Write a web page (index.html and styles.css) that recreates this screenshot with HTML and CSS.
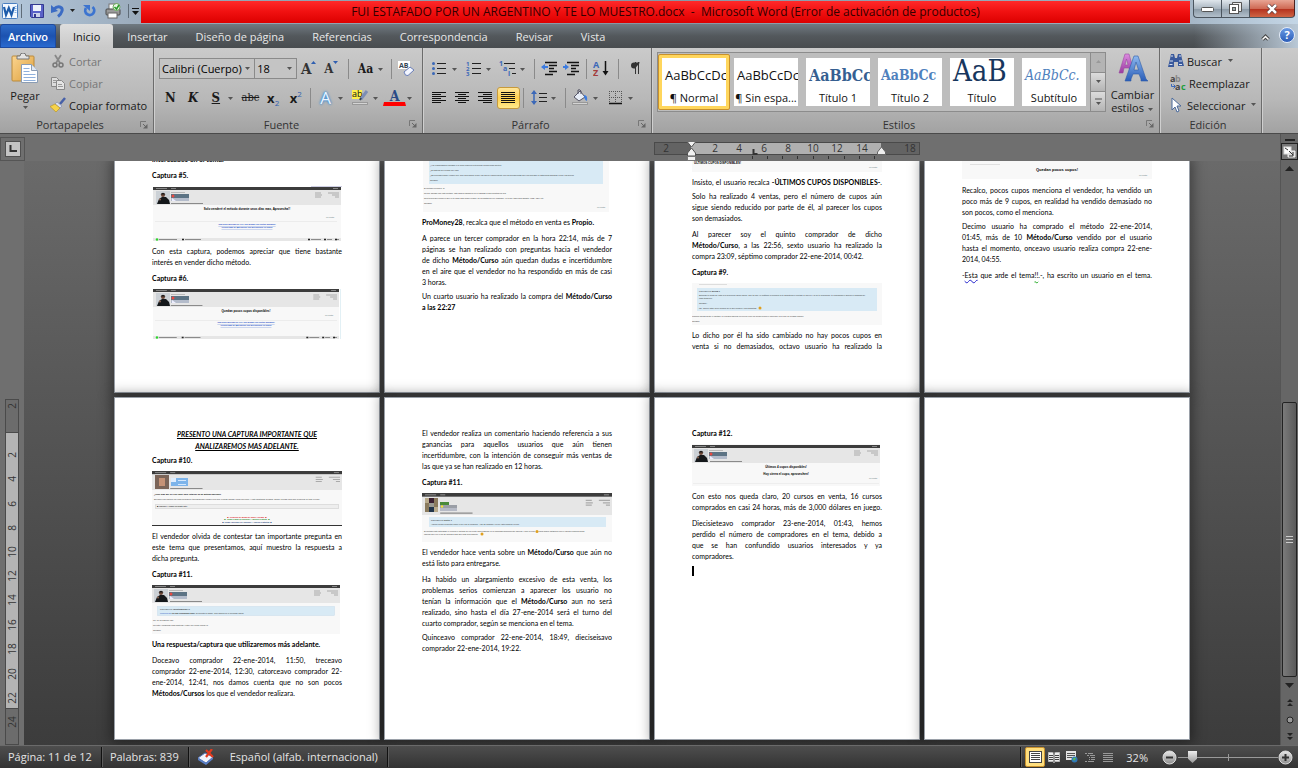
FILE: index.html
```html
<!DOCTYPE html>
<html lang="es">
  <head>
    <meta charset="UTF-8" />
    <meta name="viewport" content="width=device-width, initial-scale=1.0" />
    <title>FUI ESTAFADO POR UN ARGENTINO Y TE LO MUESTRO.docx - Microsoft Word</title>
    <link rel="stylesheet" href="styles.css">
  </head>
  <body>
    <!-- shared drawings -->
    <svg class="defs" width="0" height="0">
      <defs>
        <linearGradient id="gBlue" x1="0" y1="0" x2="0" y2="1"><stop offset="0" stop-color="#8db8ee"/><stop offset="1" stop-color="#2a5db8"/></linearGradient>
        <linearGradient id="gPink" x1="0" y1="0" x2="0" y2="1"><stop offset="0" stop-color="#dc8be0"/><stop offset="1" stop-color="#9a3aa0"/></linearGradient>
        <linearGradient id="gBoard" x1="0" y1="0" x2="1" y2="1"><stop offset="0" stop-color="#fbd590"/><stop offset="1" stop-color="#dd9f3c"/></linearGradient>
        <linearGradient id="gKnob" x1="0" y1="0" x2="0" y2="1"><stop offset="0" stop-color="#e8e8e8"/><stop offset="1" stop-color="#8c8c8c"/></linearGradient>
      </defs>
      <symbol id="arrow" viewBox="0 0 7 4"><path d="M1 0h5L3.500 3z" fill="#555"/></symbol>
      <symbol id="launch" viewBox="0 0 8 8"><path d="M.5 6V.5H6" fill="none" stroke="#777"/><path d="M3 3l3 3" stroke="#666"/><path d="M7.500 3v4.500H3z" fill="#666"/></symbol>
      <symbol id="posthead" viewBox="0 0 188 18" preserveAspectRatio="none">
        <rect width="188" height="18" fill="#e6e6e6"/>
        <rect width="188" height="3" fill="#3c3c3c"/>
        <path d="M3 1.500h11M18 1.500h5M180 1.500h5" stroke="#999" stroke-width=".8"/>
        <path d="M162 6h6M162 8h7M162 10h6M175 6h11M179 8h7M182 10h4" stroke="#aaa"/>
        <path d="M18 16.500h32" stroke="#8a8a8a"/>
      </symbol>
      <symbol id="man" viewBox="0 0 33 14">
        <rect width="14" height="13" fill="#ccd1d6"/>
        <path d="M1 13l2-5 3-2h4l3 3 1 4z" fill="#15181b"/>
        <circle cx="7" cy="4" r="2" fill="#6b4637"/>
        <path d="M4.500 3.500Q7 0 9.500 3.500z" fill="#1a1a1a"/>
        <circle cx="4" cy="8.500" r="1" fill="#8d6452"/>
        <path d="M15 1.500h14" stroke="#bbb"/>
        <rect x="15" y="3" width="18" height="4" fill="#5c7384"/>
        <rect x="15" y="7" width="18" height="3" fill="#b4bccb"/>
        <circle cx="17" cy="5" r="1.500" fill="#e84a42"/>
        <path d="M16 7l4 3h-4z" fill="#eef"/>
      </symbol>
      <symbol id="postfoot" viewBox="0 0 188 3">
        <rect width="188" height="3" fill="#e6e6e6"/>
        <circle cx="4" cy="1.500" r="1.200" fill="#2bd62b"/>
        <path d="M6 1.500h18M32 1.500h16M158 1.500h10M174 1.500h5M184 1.500h2" stroke="#8a8a8a"/>
        <path d="M29 1.500h2M155 1.500h2M171 1.500h2M182 1.500h2" stroke="#222" stroke-width="1.500"/>
      </symbol>
    </svg>

    <div class="app">
      <header class="titlebar">
        <div class="quick">
          <svg width="16" height="16" viewBox="0 0 16 16"><rect x=".5" y=".5" width="15" height="15" rx="1" fill="#f4f9ff" stroke="#4a7fc0"/><path d="M12.500 3.500h2M12.500 5.500h2M12.500 7.500h2M12.500 9.500h2" stroke="#8ab4e4"/><path d="M2 4l2 8 2.800-7 2.700 7L12 4" fill="none" stroke="#1d5cab" stroke-width="2.200"/></svg>
          <span class="qsep"></span>
          <button class="qbtn" aria-label="Guardar"><svg width="14" height="14" viewBox="0 0 14 14"><path d="M.5.500h13v13h-12l-1-1z" fill="#5a62c8" stroke="#33398f"/><rect x="3" y="1" width="8" height="6" fill="#eef2fb"/><rect x="3" y="9" width="7" height="4" fill="#cdd3ea"/><rect x="4" y="10" width="2" height="3" fill="#33398f"/></svg></button>
          <button class="qbtn wide" aria-label="Deshacer"><svg width="13" height="14" viewBox="0 0 13 14"><path d="M3 5c4-4 9-2 8 2-.5 2-2 4-4 5.500" fill="none" stroke="#3c6cc4" stroke-width="3"/><path d="M0 1v8l7-2z" fill="#3c6cc4"/></svg><svg width="7" height="4"><path d="M1 0h5L3.500 3z" fill="#222"/></svg></button>
          <button class="qbtn" aria-label="Rehacer"><svg width="13" height="14" viewBox="0 0 13 14"><path d="M9.500 3a4.500 4.500 0 1 1-6.500 1" fill="none" stroke="#3c74d0" stroke-width="2.800"/><path d="M0 1h7v6z" fill="#3c74d0"/></svg></button>
          <button class="qbtn" aria-label="Imprimir"><svg width="16" height="16" viewBox="0 0 16 16"><rect x="4" y="1" width="8" height="6" fill="#fff" stroke="#777"/><rect x="1" y="6" width="14" height="6" rx="1" fill="#9a9a9a" stroke="#4a4a4a"/><rect x="3" y="10" width="9" height="5" fill="#fff" stroke="#666"/><circle cx="11.500" cy="4" r="3.500" fill="#eaf7e4" stroke="#6aa85a"/><path d="M9.500 4l2 2 2.500-4" fill="none" stroke="#2a9a2a" stroke-width="1.600"/></svg></button>
          <span class="qsep"></span>
          <button class="qmore" aria-label="Personalizar"><svg width="7" height="8"><path d="M0 .5h7" stroke="#111"/><path d="M0 3h7L3.500 7z" fill="#111"/></svg></button>
        </div>
        <div class="caption">FUI ESTAFADO POR UN ARGENTINO Y TE LO MUESTRO.docx &nbsp;-&nbsp; Microsoft Word (Error de activación de productos)</div>
        <div class="winbtns">
          <button aria-label="Minimizar"><svg width="13" height="6"><rect x=".5" y="1.500" width="12" height="4" rx="1" fill="#fff" stroke="#555"/></svg></button>
          <button aria-label="Restaurar"><svg width="13" height="13"><path d="M3.500 3V.5h9v9H10" fill="#eee" stroke="#555"/><rect x=".5" y="2.500" width="9" height="9" fill="#fff" stroke="#555"/><rect x="3.500" y="5.500" width="3" height="3" fill="#9aa" stroke="#555"/></svg></button>
          <button class="close" aria-label="Cerrar"><svg width="12" height="10"><path d="M2 1l8 8M10 1L2 9" stroke="#5b3a3a" stroke-width="4"/><path d="M2 1l8 8M10 1L2 9" stroke="#fff" stroke-width="2.500"/></svg></button>
        </div>
      </header>

      <nav class="tabs">
        <button class="file">Archivo</button>
        <button class="tab active">Inicio</button>
        <button class="tab">Insertar</button>
        <button class="tab">Diseño de página</button>
        <button class="tab">Referencias</button>
        <button class="tab">Correspondencia</button>
        <button class="tab">Revisar</button>
        <button class="tab">Vista</button>
        <span class="fill"></span>
        <button class="mini" aria-label="Minimizar la cinta"><svg width="9" height="7"><path d="M1.500 5.500l3-3 3 3" fill="none" stroke="#444" stroke-width="3.500"/><path d="M1.500 5.500l3-3 3 3" fill="none" stroke="#fff" stroke-width="1.500"/></svg></button>
        <button class="help" aria-label="Ayuda">?</button>
      </nav>

      <section class="ribbon">
        <div class="group g-clip">
          <div class="body">
            <button class="big">
              <svg width="28" height="31" viewBox="0 0 28 31"><rect x="1" y="3" width="22" height="25" rx="1" fill="url(#gBoard)" stroke="#b98a3c"/><path d="M6 6V3h3q0-3 3-3t3 3h3v3z" fill="#e4e4e4" stroke="#777"/><path d="M10.500 11.500h10l6 6v12h-16z" fill="#fff" stroke="#8a9cb4"/><path d="M20.500 11.500v6h6" fill="#dfe8f5" stroke="#8a9cb4"/><path d="M12.500 15.500h6M12.500 18.500h6M12.500 21.500h12M12.500 24.500h12M12.500 27.500h12" stroke="#8fb0dc"/></svg>
              <span>Pegar</span>
              <svg width="7" height="4"><use href="#arrow"/></svg>
            </button>
            <div class="list">
              <button class="row off"><svg width="16" height="16" viewBox="0 0 16 16"><path d="M5 2l5 8M11 2l-5 8" stroke="#888" stroke-width="1.800"/><circle cx="5" cy="12" r="2" fill="none" stroke="#777" stroke-width="1.500"/><circle cx="11" cy="12" r="2" fill="none" stroke="#777" stroke-width="1.500"/></svg>Cortar</button>
              <button class="row off"><svg width="16" height="16" viewBox="0 0 16 16"><path d="M1.500 2.500h5l3 3v6h-8z" fill="#ddd" stroke="#888"/><path d="M6.500 5.500h5l3 3v6h-8z" fill="#e4e4e4" stroke="#888"/><path d="M3 5.500h3M3 7.500h3M8 9.500h4M8 11.500h5" stroke="#999"/></svg>Copiar</button>
              <button class="row"><svg width="16" height="16" viewBox="0 0 16 16"><path d="M15 1l-5 6" stroke="#4760a8" stroke-width="2.500"/><path d="M7 5l5 4-2 2-5-4z" fill="#d9dff0" stroke="#7a84a8" stroke-width=".6"/><path d="M5 7l5 4-4 4L0 9.500z" fill="#f6d34a" stroke="#b58f20" stroke-width=".6"/></svg>Copiar formato</button>
            </div>
          </div>
          <div class="name"><span>Portapapeles</span><svg width="8" height="8"><use href="#launch"/></svg></div>
        </div>

        <div class="group g-font">
          <div class="body rows">
            <div class="tools">
              <label class="combo font"><select aria-label="Fuente"><option>Calibri (Cuerpo)</option></select><svg width="7" height="4"><use href="#arrow"/></svg></label>
              <label class="combo size"><select aria-label="Tamaño"><option>18</option></select><svg width="7" height="4"><use href="#arrow"/></svg></label>
              <button class="tool serif grow">A<svg width="5" height="4"><path d="M0 3h5L2.500 0z" fill="#2f5fb0"/></svg></button>
              <button class="tool serif shrink">A<svg width="5" height="4"><path d="M0 0h5L2.500 3z" fill="#2f5fb0"/></svg></button>
              <span class="sep"></span>
              <button class="tool serif aa">Aa</button><button class="arr" aria-label="Mayúsculas"><svg width="7" height="4"><use href="#arrow"/></svg></button>
              <span class="sep tight"></span>
              <button class="tool" aria-label="Borrar formato"><svg width="17" height="17" viewBox="0 0 17 17"><rect x="0" y="1" width="12" height="8" fill="#fff"/><text x="1" y="8" font-size="7" font-weight="bold" fill="#345">AB</text><path d="M6 12l6-5 4 3-6 5.500q-3 1-4-3.500z" fill="#f3f6ff" stroke="#6b7fb8"/></svg></button>
            </div>
            <div class="tools">
              <button class="tool serif"><b>N</b></button>
              <button class="tool serif"><b><i>K</i></b></button>
              <button class="tool serif"><b><u>S</u></b></button><button class="arr" aria-label="Subrayado"><svg width="7" height="4"><use href="#arrow"/></svg></button>
              <button class="tool serif strike"><s>abc</s></button>
              <button class="tool script"><b>x</b><sub>2</sub></button>
              <button class="tool script"><b>x</b><sup>2</sup></button>
              <span class="sep tight"></span>
              <button class="tool glow">A</button><button class="arr" aria-label="Efectos"><svg width="7" height="4"><use href="#arrow"/></svg></button>
              <button class="tool" aria-label="Resaltar"><svg width="17" height="17" viewBox="0 0 17 17"><rect x="0" y="1" width="10" height="9" fill="#fff04a"/><text x="0" y="8" font-size="9" fill="#111">ab</text><path d="M15 2L9 10" stroke="#7c8db5" stroke-width="3"/><path d="M8 11l1-2" stroke="#345" stroke-width="2"/><rect x=".5" y="13.500" width="15" height="2" fill="#d4d4d4" stroke="#999"/></svg></button><button class="arr" aria-label="Color de resaltado"><svg width="7" height="4"><use href="#arrow"/></svg></button>
              <button class="tool serif redbar">A</button><button class="arr" aria-label="Color de fuente"><svg width="7" height="4"><use href="#arrow"/></svg></button>
            </div>
          </div>
          <div class="name"><span>Fuente</span><svg width="8" height="8"><use href="#launch"/></svg></div>
        </div>

        <div class="group g-par">
          <div class="body rows">
            <div class="tools">
              <button class="tool" aria-label="Viñetas"><svg width="15" height="15"><path d="M5 2.500h9M5 7.500h9M5 12.500h9" stroke="#222"/><circle cx="1.500" cy="2.500" r="1.500" fill="#3b68b8"/><circle cx="1.500" cy="7.500" r="1.500" fill="#3b68b8"/><circle cx="1.500" cy="12.500" r="1.500" fill="#3b68b8"/></svg></button><button class="arr" aria-label="Viñetas"><svg width="7" height="4"><use href="#arrow"/></svg></button>
              <button class="tool" aria-label="Numeración"><svg width="15" height="15"><path d="M6 2.500h9M6 7.500h9M6 12.500h9" stroke="#222"/><g font-size="6" font-weight="bold" fill="#3b68b8"><text x="0" y="5">1</text><text x="0" y="10">2</text><text x="0" y="15">3</text></g></svg></button><button class="arr" aria-label="Numeración"><svg width="7" height="4"><use href="#arrow"/></svg></button>
              <button class="tool" aria-label="Lista multinivel"><svg width="18" height="15"><path d="M5 2.500h11M10 7.500h6M13 12.500h4" stroke="#222"/><g font-size="7" font-weight="bold" fill="#3b68b8"><text x="0" y="5">1</text><text x="4" y="10">a</text><text x="9" y="15">i</text></g></svg></button><button class="arr" aria-label="Multinivel"><svg width="7" height="4"><use href="#arrow"/></svg></button>
              <span class="sep tight"></span>
              <button class="tool" aria-label="Reducir sangría"><svg width="17" height="15"><path d="M4 1.500h12M8 4.500h8M8 7.500h5M8 10.500h8M4 13.500h8" stroke="#111" stroke-width="1.600"/><path d="M0 6l4-3v2h3v2H4v2z" fill="#3b7be0"/></svg></button>
              <button class="tool" aria-label="Aumentar sangría"><svg width="17" height="15"><path d="M4 1.500h12M8 4.500h8M8 7.500h5M8 10.500h8M4 13.500h8" stroke="#111" stroke-width="1.600"/><path d="M6 6L2 3v2H0v2h2v2z" fill="#3b7be0"/></svg></button>
              <span class="sep tight"></span>
              <button class="tool" aria-label="Ordenar"><svg width="17" height="17"><g font-size="9" font-weight="bold"><text x="0" y="8" fill="#3b68b8">A</text><text x="0" y="16" fill="#a33c3c">Z</text></g><path d="M12.500 1v12" stroke="#111" stroke-width="1.500"/><path d="M9.500 11h6l-3 4.500z" fill="#111"/></svg></button>
              <span class="sep"></span>
              <button class="tool" aria-label="Mostrar todo"><svg width="11" height="13"><path d="M10 .5H4a3 3 0 0 0 0 6h1z" fill="#333"/><path d="M5.500 0v12M8.500 0v12" stroke="#333"/></svg></button>
            </div>
            <div class="tools">
              <button class="tool" aria-label="Izquierda"><svg width="15" height="13"><path d="M0 1.500h14M0 3.500h9M0 5.500h14M0 7.500h9M0 9.500h14M0 11.500h9" stroke="#111"/></svg></button>
              <button class="tool" aria-label="Centrar"><svg width="15" height="13"><path d="M0 1.500h14M3 3.500h8M0 5.500h14M3 7.500h8M0 9.500h14M3 11.500h8" stroke="#111"/></svg></button>
              <button class="tool" aria-label="Derecha"><svg width="15" height="13"><path d="M0 1.500h14M5 3.500h9M0 5.500h14M5 7.500h9M0 9.500h14M5 11.500h9" stroke="#111"/></svg></button>
              <button class="tool on" aria-label="Justificar"><svg width="15" height="13"><path d="M0 1.500h14M0 3.500h14M0 5.500h14M0 7.500h14M0 9.500h14M0 11.500h14" stroke="#111"/></svg></button>
              <span class="sep tight"></span>
              <button class="tool" aria-label="Interlineado"><svg width="16" height="17"><path d="M3 3v11" stroke="#3b68b8" stroke-width="1.500"/><path d="M0 5l3-4 3 4zM0 12l3 4 3-4z" fill="#3b68b8"/><path d="M8 4.500h8M8 8.500h8M8 12.500h8" stroke="#222"/></svg></button><button class="arr" aria-label="Interlineado"><svg width="7" height="4"><use href="#arrow"/></svg></button>
              <span class="sep tight"></span>
              <button class="tool" aria-label="Sombreado"><svg width="17" height="17"><path d="M2 8l6-6 5 6-6 4z" fill="#e8eef8" stroke="#556"/><path d="M6 5V1q2-1 3 1v3" fill="none" stroke="#556"/><path d="M12 6q4 0 3 6-3-1-3-6z" fill="#3b7be0"/><rect x=".5" y="13.500" width="15" height="2" fill="#d4d4d4" stroke="#999"/></svg></button><button class="arr" aria-label="Sombreado"><svg width="7" height="4"><use href="#arrow"/></svg></button>
              <button class="tool" aria-label="Bordes"><svg width="14" height="14"><path d="M.5 0v13M6.500 0v13M12.500 0v13M0 .5h13M0 6.500h13" stroke="#555" stroke-dasharray="1 1"/><path d="M0 12.500h13" stroke="#111" stroke-width="1.500"/></svg></button><button class="arr" aria-label="Bordes"><svg width="7" height="4"><use href="#arrow"/></svg></button>
            </div>
          </div>
          <div class="name"><span>Párrafo</span><svg width="8" height="8"><use href="#launch"/></svg></div>
        </div>

        <div class="group g-style">
          <div class="body">
            <div class="gallery">
              <button class="style on"><span class="demo normal">AaBbCcDc</span><span>¶ Normal</span></button>
              <button class="style"><span class="demo normal">AaBbCcDc</span><span>¶ Sin espa...</span></button>
              <button class="style"><span class="demo h1">AaBbCc</span><span>Título 1</span></button>
              <button class="style"><span class="demo h2">AaBbCc</span><span>Título 2</span></button>
              <button class="style"><span class="demo title">AaB</span><span>Título</span></button>
              <button class="style"><span class="demo sub">AaBbCc.</span><span>Subtítulo</span></button>
              <div class="scroll">
                <button class="dim" aria-label="Arriba"><svg width="7" height="4"><path d="M1 3h5L3.500 0z" fill="#999"/></svg></button>
                <button aria-label="Abajo"><svg width="7" height="4"><use href="#arrow"/></svg></button>
                <button aria-label="Más"><svg width="9" height="8"><path d="M1 1h7" stroke="#555"/><path d="M2 4h5L4.500 7z" fill="#555"/></svg></button>
              </div>
            </div>
            <button class="big change">
              <svg width="30" height="30" viewBox="0 0 30 30"><path d="M1 20L7 1h4l5 18h-4l-1-4H6l-1 5zM7 12h3L8.500 6z" fill="url(#gPink)" stroke="#9a4aa0" stroke-width=".6"/><path d="M7 28l9-25h4l8 23 2 2h-7v-2l-2-5h-6l-2 5v2zM16 17h4.500L18 9z" fill="url(#gBlue)" stroke="#2d5ca8" stroke-width=".6"/></svg>
              <span>Cambiar</span>
              <span>estilos <svg width="7" height="4"><use href="#arrow"/></svg></span>
            </button>
          </div>
          <div class="name"><span>Estilos</span><svg width="8" height="8"><use href="#launch"/></svg></div>
        </div>

        <div class="group g-edit">
          <div class="body">
            <div class="list">
              <button class="row"><svg width="16" height="16" viewBox="0 0 16 16"><path d="M2 6l1-5h3l1 4h2l1-4h3l1 5 2 7h-6V9H6v5H0z" fill="#39599c"/><path d="M3 3h2M11 3h2M2 8h3M11 8h3M1.500 11.500h3M11 11.500h3" stroke="#d7e0f2"/></svg>Buscar<svg width="7" height="4"><use href="#arrow"/></svg></button>
              <button class="row"><svg width="16" height="16" viewBox="0 0 16 16"><g font-size="9" font-weight="bold"><text x="0" y="7" fill="#444">a</text><text x="5" y="7" fill="#888">b</text><text x="5" y="15" fill="#444">a</text><text x="11" y="15" fill="#1e9e3c">c</text></g><path d="M1.500 9v2.500H5M3.500 9.500l2 2-2 2" fill="none" stroke="#3b68b8"/></svg>Reemplazar</button>
              <button class="row"><svg width="16" height="16" viewBox="0 0 16 16"><path d="M4 1v12l3-3 2 5 2-1-2-5h4z" fill="#fff" stroke="#4b6a9c"/></svg>Seleccionar<svg width="7" height="4"><use href="#arrow"/></svg></button>
            </div>
          </div>
          <div class="name"><span>Edición</span></div>
        </div>
      </section>

      <main class="work">
        <div class="corner"><button aria-label="Tabulación"><svg width="8" height="8"><path d="M1.500 0v6H8" fill="none" stroke="#333" stroke-width="2"/></svg></button></div>
        <div class="hruler cols">
          <svg width="266" height="19" viewBox="0 0 266 19">
            <rect x=".5" y=".5" width="265" height="12" fill="#636363" stroke="#4a4a4a"/>
            <rect x="37" y="1" width="190" height="11" fill="#b0b0b0"/>
            <g font-size="10" fill="#333" text-anchor="middle"><text x="12" y="10">2</text><text x="61" y="10">2</text><text x="85" y="10">4</text><text x="110" y="10">6</text><text x="134" y="10">8</text><text x="159" y="10">10</text><text x="183" y="10">12</text><text x="208" y="10">14</text><text x="256" y="10">18</text></g>
            <path d="M99.500 7v5h4" fill="none" stroke="#333" stroke-width="2"/>
            <path d="M98.500 14v3M113.500 14v3M128.500 14v3M143.500 14v3M159.500 14v3M174.500 14v3M190.500 14v3M205.500 14v3M220.500 14v3" stroke="#333"/>
            <path d="M33.500-2h8v2l-4 5-4-5zM33.500 14V11l4-5 4 5v3z" fill="#f2f2f2" stroke="#555"/>
            <rect x="33.500" y="14.500" width="8" height="4" fill="#f2f2f2" stroke="#777"/>
            <path d="M223.500 12.500V10l4-5 4 5v2.500z" fill="#eee" stroke="#666"/>
          </svg>
        </div>
        <div class="vruler">
          <svg width="14" height="346" viewBox="0 0 14 346">
            <rect x=".5" y=".5" width="13" height="345" fill="#6c6c6c" stroke="#4a4a4a"/>
            <rect x="1" y="34" width="12" height="276" fill="#b4b4b4"/>
            <path d="M1 33.500h12M1 309.500h12" stroke="#4a4a4a"/>
            <g font-size="10" fill="#333" text-anchor="middle">
              <text transform="translate(11 7) rotate(-90)">2</text><text transform="translate(11 56) rotate(-90)">2</text><text transform="translate(11 80) rotate(-90)">4</text><text transform="translate(11 105) rotate(-90)">6</text><text transform="translate(11 129) rotate(-90)">8</text><text transform="translate(11 153) rotate(-90)">10</text><text transform="translate(11 177) rotate(-90)">12</text><text transform="translate(11 201) rotate(-90)">14</text><text transform="translate(11 226) rotate(-90)">16</text><text transform="translate(11 250) rotate(-90)">18</text><text transform="translate(11 275) rotate(-90)">20</text><text transform="translate(11 299) rotate(-90)">22</text><text transform="translate(11 323) rotate(-90)">24</text>
            </g>
          </svg>
        </div>

        <div class="canvas cols">
          <article class="page cut">
            <p class="above"><b class="last">interesados en el tema.</b></p>
            <p><b class="last">Captura #5.</b></p>
            <svg class="shot" width="190" height="55" viewBox="0 0 190 55">
              <rect x="1" y="1" width="188" height="54" fill="#f8f8f8"/>
              <path d="M159 .5h31" stroke="#cfcfe4"/>
              <use href="#posthead" x="1" y="1" width="188" height="18"/><use href="#man" x="4" y="5" width="33" height="14"/>
              <text x="95" y="24" class="t3 bold">Solo venderé el método durante unos días mas, Aprovecha!!</text>
              <text x="174" y="32" class="like">Me gusta</text>
              <path d="M3 35.500h182" stroke="#e4e4e4" stroke-width=".6"/>
              <text x="95" y="39" class="t2 blue">Ingresa al Mercado de CPA hoy mismo con costos mínimos!</text>
              <text x="95" y="42" class="t2 blue">Genera mas de $80 diarios con Microniches en Inglés</text>
              <use href="#postfoot" x="1" y="52" width="188" height="3"/>
            </svg>
            <p>
              <span>Con esta captura, podemos apreciar que tiene bastante</span>
              <span class="last">interés en vender dicho método.</span>
            </p>
            <p><b class="last">Captura #6.</b></p>
            <svg class="shot" width="190" height="50" viewBox="0 0 190 50">
              <rect x="1" width="186" height="50" fill="#f8f8f8"/>
              <path d="M188.500 0v50" stroke="#e2f0f5"/>
              <use href="#posthead" x="1" y="0" width="186" height="18"/><use href="#man" x="4" y="4" width="33" height="14"/>
              <text x="94" y="23" class="t3 bold">Quedan pocos cupos disponibles!</text>
              <text x="173" y="27" class="like">Me gusta</text>
              <path d="M3 31.500h182" stroke="#e4e4e4" stroke-width=".6"/>
              <text x="94" y="34" class="t2 blue">Ingresa al Mercado de CPA hoy mismo con costos mínimos!</text>
              <text x="94" y="37" class="t2 blue">Genera mas de $80 diarios con Microniches en Inglés</text>
              <use href="#postfoot" x="1" y="47" width="186" height="3"/>
            </svg>
          </article>

          <article class="page cut">
            <svg class="shot first" width="190" height="51" viewBox="0 0 190 51">
              <rect x="1" width="186" height="51" fill="#f8f8f8"/>
              <rect x="7" width="174" height="23" fill="#d8eaf5"/>
              <g class="post"><text x="8" y="5">¿Hay posibilidad de fracasar o la única manera es teniendo mucha mala suerte?</text><text x="8" y="10">¿El sistema fue creado por vos?</text><text x="8" y="15">¿Es necesario saber vender muy bien para ganar lo que vos decís o simplemente con las herramientas que vos nos das ya estaremos ganando lo que vos decís?</text><text x="8" y="20">Saludos!</text>
              <text x="2" y="28">El método es propio, si.</text><text x="2" y="33">No hay fracaso con este método, esto habría fracaso si no lo trabajas ni dos minutos por día.</text><text x="2" y="38">Solo tienes que copiar lo que yo te paso para poder vender, no necesitas ser un vendedor, yo te doy todo para ganarte. USD, PDF, etc.</text><text x="2" y="43">Saludos!</text></g>
              <text x="175" y="47" class="like">Me gusta</text>
            </svg>
            <p><span class="last"><b>ProMoney28</b>, recalca que el método en venta es <b>Propio.</b></span></p>
            <p>
              <span>A parece un tercer comprador en la hora 22:14, más de 7</span>
              <span>páginas se han realizado con preguntas hacia el vendedor</span>
              <span>de dicho <b>Método/Curso</b> aún quedan dudas e incertidumbre</span>
              <span>en el aire que el vendedor no ha respondido en más de casi</span>
              <span class="last">3 horas.</span>
            </p>
            <p class="near">
              <span>Un cuarto usuario ha realizado la compra del <b>Método/Curso</b></span>
              <span class="last"><b>a las 22:27</b></span>
            </p>
          </article>

          <article class="page cut">
            <svg class="shot first" width="190" height="11" viewBox="0 0 190 11">
              <rect width="190" height="11" fill="#f8f8f8"/>
              <text x="2" y="3" font-size="3" font-weight="bold">ÚLTIMOS CUPOS DISPONIBLES!</text>
              <text x="177" y="7" class="like">Me gusta</text>
            </svg>
            <p><span>Insisto, el usuario recalca <b>-ÚLTIMOS CUPOS DISPONIBLES-</b>.</span></p>
            <p class="near">
              <span>Solo ha realizado 4 ventas, pero el número de cupos aún</span>
              <span>sigue siendo reducido por parte de él, al parecer los cupos</span>
              <span class="last">son demasiados.</span>
            </p>
            <p>
              <span>Al parecer soy el quinto comprador de dicho</span>
              <span><b>Método/Curso</b>, a las 22:56, sexto usuario ha realizado la</span>
              <span class="last">compra 23:09, séptimo comprador 22-ene-2014, 00:42.</span>
            </p>
            <p><b class="last">Captura #9.</b></p>
            <svg class="shot" width="190" height="42" viewBox="0 0 190 42">
              <rect width="190" height="42" fill="#f8f8f8"/>
              <rect x="5" y="5" width="180" height="23" fill="#d8eaf5"/>
              <path d="M7 1.500h28" stroke="#ddd"/>
              <g class="post"><text x="7" y="9">❝ Enviado por <tspan font-weight="bold">miles8</tspan> ▸</text><text x="7" y="13">Entiendo tu punto de vista a la perfección ahora ahora. Que tal que yo mañana lo compro? si te garantizas el método al 100%? y si no te funcionara, te regresaras el dinero? o dudarias de</text><text x="7" y="16">cosa también?</text><text x="7" y="21">Saludos...</text><text x="7" y="26">PD. Quiero estar 100% seguro de lo que compro y sus garantías</text><text x="0" y="34">Compra mucha gente el método ya, puedes esperar un review, pero no puedo cerrar el cupo que va lo que no a pasar seguro.</text><text x="0" y="39">Saludos.</text></g>
              <circle cx="68" cy="25" r="1.500" fill="#e0a020"/>
            </svg>
            <p>
              <span>Lo dicho por él ha sido cambiado no hay pocos cupos en</span>
              <span>venta si no demasiados, octavo usuario ha realizado la</span>
            </p>
          </article>

          <article class="page cut">
            <svg class="shot first" width="190" height="19" viewBox="0 0 190 19">
              <rect width="190" height="18" fill="#f8f8f8"/>
              <path d="M8 3.500h30" stroke="#e0e0e0"/>
              <text x="95" y="10" class="t4 bold">Quedan pocos cupos!</text>
              <text x="177" y="15" class="like">Me gusta</text>
            </svg>
            <p>
              <span>Recalco, pocos cupos menciona el vendedor, ha vendido un</span>
              <span>poco más de 9 cupos, en realidad ha vendido demasiado no</span>
              <span class="last">son pocos, como el menciona.</span>
            </p>
            <p class="near">
              <span>Decimo usuario ha comprado el método 22-ene-2014,</span>
              <span>01:45, más de 10 <b>Método/Curso</b> vendido por el usuario</span>
              <span>hasta el momento, onceavo usuario realiza compra 22-ene-</span>
              <span class="last">2014, 04:55.</span>
            </p>
            <p><span>-<em class="wavy">Esta</em> que arde el tema<em class="wavy green">!!</em>.-, ha escrito un usuario en el tema.</span></p>
          </article>

          <article class="page">
            <p class="heading"><span>PRESENTO UNA CAPTURA IMPORTANTE QUE</span><span>ANALIZAREMOS MAS ADELANTE.</span></p>
            <p class="near"><b class="last">Captura #10.</b></p>
            <svg class="shot" width="190" height="55" viewBox="0 0 190 55">
              <rect width="190" height="55" fill="#f8f8f8"/>
              <use href="#posthead" width="190" height="19"/>
              <rect x="3" y="4" width="14" height="14" fill="#7a6458"/><rect x="7" y="7" width="6" height="8" fill="#c59276"/>
              <rect x="19" y="7" width="17" height="8" fill="#7db4ea"/><rect x="19" y="7" width="5" height="4" fill="#dfeeff"/><path d="M26 9.500h8M26 13.500h8" stroke="#d5e8fc"/>
              <text x="2" y="24" font-size="2" font-weight="bold">¿Tiene algo que ver con Video Card Antares? Es un método parecido?</text>
              <g class="post"><text x="2" y="29">Enviame una captura con más pruebas de tus ganancias, porque lleva que 9 horas usando varios servicios, y está mostrando 2 pagos, ganan 45 USD para solo recuperar en todo lo peso.</text></g>
              <rect x="3.500" y="33.500" width="183" height="4" fill="#eee" stroke="#ddd"/><text x="5" y="36" font-size="2">■ valdescu y pass7 les gusta esto.</text>
              <g class="t2 bold"><text x="95" y="47" fill="#d82020">★ Creación de Blogs de Super Afiliado ★</text><text x="95" y="49" fill="#1e8a1e">★ Como Ganar $ Publisher + Bonos Gratuito ★</text><text x="95" y="52" fill="#25457e">★ Como Aprender en Adsense + Videos Gratuitos ★</text></g>
              <path d="M0 54.500h190" stroke="#333"/>
            </svg>
            <p>
              <span>El vendedor olvida de contestar tan importante pregunta en</span>
              <span>este tema que presentamos, aquí muestro la respuesta a</span>
              <span class="last">dicha pregunta.</span>
            </p>
            <p><b class="last">Captura #11.</b></p>
            <svg class="shot" width="190" height="49" viewBox="0 0 190 49">
              <rect width="188" height="49" fill="#f8f8f8"/>
              <use href="#posthead" width="188" height="18"/><use href="#man" x="2" y="4" width="33" height="14"/>
              <rect x="5.500" y="21.500" width="177" height="9" fill="#d8eaf5" stroke="#c8dcea" stroke-width=".5"/>
              <g class="post"><text x="8" y="25">❝ Enviado por <tspan font-weight="bold">ValentinMoralRY</tspan> ▸</text><text x="8" y="29"><tspan fill="#2d55c0">ProMoney28</tspan> <tspan font-weight="bold">no has respondido aquí:</tspan> Te muestro a ganar +500 diarios en el Mercado Inglés</text><text x="1" y="36">No, no es nada de eso.</text><text x="1" y="41">No estoy vendiendo más capturas y estoy por cerrar cupos ya.</text><text x="1" y="46">Saludos!</text></g>
            </svg>
            <p><b class="last">Una respuesta/captura que utilizaremos más adelante.</b></p>
            <p>
              <span>Doceavo comprador 22-ene-2014, 11:50, treceavo</span>
              <span>comprador 22-ene-2014, 12:30, catorceavo comprador 22-</span>
              <span>ene-2014, 12:41, nos damos cuenta que no son pocos</span>
              <span class="last"><b>Métodos/Cursos</b> los que el vendedor realizara.</span>
            </p>
          </article>

          <article class="page">
            <p>
              <span>El vendedor realiza un comentario haciendo referencia a sus</span>
              <span>ganancias para aquellos usuarios que aún tienen</span>
              <span>incertidumbre, con la intención de conseguir más ventas de</span>
              <span class="last">las que ya se han realizado en 12 horas.</span>
            </p>
            <p><b class="last">Captura #11.</b></p>
            <svg class="shot" width="190" height="49" viewBox="0 0 190 49">
              <rect width="190" height="49" fill="#f8f8f8"/>
              <rect y="18" width="190" height="4" fill="#e6e6e6"/><use href="#posthead" width="190" height="22"/>
              <rect x="3" y="5" width="13" height="14" fill="#8a7a5c"/><path d="M3 5h4v5H3zM12 14h4v5h-4z" fill="#b9ab8c"/><path d="M7 5h5v5H7z" fill="#3a2030"/><path d="M7 14h5v5H7z" fill="#22354a"/><rect x="7" y="10" width="5" height="4" fill="#9a9a92"/>
              <rect x="18" y="9" width="9" height="3" fill="#4a8a3a"/><rect x="18" y="12" width="17" height="3" fill="#9a9ea6"/><rect x="18" y="15" width="17" height="3" fill="#b6bac6"/><circle cx="20" cy="13.500" r="1.200" fill="#f4e23a"/>
              <rect x="7" y="24" width="177" height="10" fill="#d8eaf5"/>
              <g class="post"><text x="9" y="28">❝ Enviado por <tspan font-weight="bold">Nexter</tspan> ▸</text><text x="9" y="32">Alguien puede comentar como le fue con la compra?.. Van 29 páginas y no he visto ninguno review.</text><text x="2" y="39">El método esta entregado el viernes el método se ira vuelto esos paginas ya la comprado simplemente esperar y dejo review. &#160; &#160; Ahora seguir estaba de con el usuario informa arriba</text><text x="2" y="42">informó que ven el fin de semana para que mas loca soporte.</text></g>
              <circle cx="115" cy="38.500" r="1.500" fill="#e0a020"/><circle cx="60" cy="41" r="1.500" fill="#e0a020"/>
            </svg>
            <p>
              <span>El vendedor hace venta sobre un <b>Método/Curso</b> que aún no</span>
              <span class="last">está listo para entregarse.</span>
            </p>
            <p>
              <span>Ha habido un alargamiento excesivo de esta venta, los</span>
              <span>problemas serios comienzan a aparecer los usuario no</span>
              <span>tenían la información que el <b>Método/Curso</b> aun no será</span>
              <span>realizado, sino hasta el día 27-ene-2014 será el turno del</span>
              <span class="last">cuarto comprador, según se menciona en el tema.</span>
            </p>
            <p class="near">
              <span>Quinceavo comprador 22-ene-2014, 18:49, dieciseisavo</span>
              <span class="last">comprador 22-ene-2014, 19:22.</span>
            </p>
          </article>

          <article class="page">
            <p><b class="last">Captura #12.</b></p>
            <svg class="shot" width="190" height="42" viewBox="0 0 190 42">
              <rect width="188" height="42" fill="#f8f8f8"/>
              <use href="#posthead" y="1" width="188" height="18"/><use href="#man" x="2" y="5" width="33" height="14"/>
              <text x="94" y="24" class="t3 bold">Últimos 4 cupos disponibles!</text>
              <text x="94" y="31" class="t3 bold">Hoy cierra el cupo, aprovechen!</text>
              <text x="177" y="35" class="like">Me gusta</text>
              <path d="M1 39.500h186" stroke="#e8e8e8" stroke-width=".6"/>
            </svg>
            <p>
              <span>Con esto nos queda claro, 20 cursos en venta, 16 cursos</span>
              <span>comprados en casi 24 horas, más de 3,000 dólares en juego.</span>
            </p>
            <p>
              <span>Diecisieteavo comprador 23-ene-2014, 01:43, hemos</span>
              <span>perdido el número de compradores en el tema, debido a</span>
              <span>que se han confundido usuarios interesados y ya</span>
              <span class="last">compradores.</span>
            </p>
            <div class="caret"></div>
          </article>

          <article class="page"></article>
        </div>

        <div class="vscroll">
          <span class="split"></span>
          <button class="toggle" aria-label="Regla"><svg width="13" height="12"><rect x="1" y="1" width="7" height="7" fill="#fff" stroke="#ddd"/><path d="M8 5h4v6H5V8" fill="#ddd" stroke="#eee"/><path d="M2 2l3 2M6 5l4 4M10 6v4H6" fill="none" stroke="#333"/></svg></button>
          <button class="step" aria-label="Subir"><svg width="9" height="5"><path d="M0 5h9L4.500 0z" fill="#222"/></svg></button>
          <div class="track"><div class="thumb"><span></span><span></span><span></span></div></div>
          <button class="step" aria-label="Bajar"><svg width="9" height="5"><path d="M0 0h9L4.500 5z" fill="#222"/></svg></button>
          <button class="jump" aria-label="Anterior"><svg width="6" height="8"><path d="M0 3h6L3 0zM0 7h6L3 4z" fill="#222"/></svg></button>
          <button class="jump" aria-label="Objeto"><svg width="8" height="8"><circle cx="4" cy="4" r="3" fill="#999" stroke="#222"/></svg></button>
          <button class="jump" aria-label="Siguiente"><svg width="6" height="8"><path d="M0 0h6L3 3zM0 4h6L3 7z" fill="#222"/></svg></button>
        </div>
      </main>

      <footer class="status">
        <span class="cell">Página: 11 de 12</span>
        <span class="cell">Palabras: 839</span>
        <span class="cell lang"><svg width="18" height="16" viewBox="0 0 18 16"><path d="M1 9l7-5 8 4-7 6z" fill="#f2f4fa" stroke="#5a78b8"/><path d="M1 9v2l8 5 7-6V8l-7 6z" fill="#5a80c8"/><path d="M9 1l7 7M15 0L9 8" stroke="#e23a1e" stroke-width="2.200"/></svg>Español (alfab. internacional)</span>
        <span class="fill"></span>
        <span class="cell"></span>
        <button class="view on" aria-label="Diseño de impresión"><svg width="13" height="12"><rect x=".5" y=".5" width="12" height="11" fill="#fff" stroke="#444"/><path d="M2 2.500h9M2 4.500h9M2 6.500h9M2 8.500h9" stroke="#444"/></svg></button>
        <button class="view" aria-label="Lectura"><svg width="12" height="12"><path d="M.5 1.500h4l1.500 1 1.500-1h4v9h-4l-1.500 1-1.500-1h-4z" fill="#eee" stroke="#bbb"/><path d="M1 4.500h4M1 6.500h4M1 8.500h4M7 4.500h4M7 6.500h4M7 8.500h4M6 2v9" stroke="#444"/></svg></button>
        <button class="view" aria-label="Diseño web"><svg width="12" height="12"><rect width="10" height="9" fill="#e4e4e4"/><path d="M1 2.500h8M1 4.500h8M1 6.500h5" stroke="#555"/><circle cx="8.500" cy="8.500" r="3" fill="#2f78b8"/><path d="M7 8q1-2 3-1l-2 3z" fill="#5cc04a"/></svg></button>
        <button class="view" aria-label="Esquema"><svg width="10" height="11"><path d="M0 1.500h2M3 1.500h5M2 3.500h2M5 3.500h5M4 5.500h1M6 5.500h4M4 7.500h1M6 7.500h4M0 9.500h2M3 9.500h6" stroke="#999"/></svg></button>
        <button class="view" aria-label="Borrador"><svg width="10" height="11"><path d="M0 1.500h10M0 3.500h10M0 5.500h10M0 7.500h10M0 9.500h10" stroke="#999"/></svg></button>
        <span class="zoom">32%</span>
        <button class="round" aria-label="Alejar"><svg width="15" height="15"><circle cx="7.500" cy="7.500" r="6.500" fill="url(#gKnob)" stroke="#ddd"/><path d="M4 7.500h7" stroke="#333" stroke-width="2"/></svg></button>
        <input class="slider" type="range" min="0" max="100" value="11" aria-label="Zoom">
        <button class="round" aria-label="Acercar"><svg width="15" height="15"><circle cx="7.500" cy="7.500" r="6.500" fill="url(#gKnob)" stroke="#ddd"/><path d="M4 7.500h7M7.500 4v7" stroke="#333" stroke-width="2"/></svg></button>
      </footer>
    </div>
  </body>
</html>
```
FILE: styles.css
```css
*{
    margin: 0;
    padding: 0;
    box-sizing: border-box;
}
body{
    font-family: "Open Sans", "Noto Sans", sans-serif;
    font-size: 11px;
    color: #1a1a1a;
    overflow: hidden;
}
button{
    font: inherit;
    color: inherit;
    background: none;
    border: none;
}
svg{
    flex: none;
}
.defs{
    position: absolute;
}
.app{
    height: 100vh;
    display: flex;
    flex-direction: column;
}
.fill{
    flex: 1;
}

/* title bar */
.titlebar{
    height: 24px;
    display: flex;
    background: linear-gradient(90deg, #b4c8dc, #98a8b8 12%, #8796a4 50%, #9fb0c0 90%, #c4d6e6);
}
.quick{
    width: 141px;
    display: flex;
    align-items: center;
    padding: 0 2px;
    height: 22px;
}
.qsep{
    width: 1px;
    height: 14px;
    margin: 0 3px;
    background: #5f6c78;
}
.qbtn{
    width: 25px;
    height: 20px;
    display: flex;
    align-items: center;
    justify-content: center;
}
.qbtn.wide{
    width: 32px;
    gap: 5px;
}
.qmore{
    width: 8px;
}
.caption{
    flex: 1;
    height: 22px;
    margin-top: 1px;
    line-height: 22px;
    font-size: 12px;
    text-align: center;
    white-space: nowrap;
    color: #300;
    background: linear-gradient(#ff2a2a, #f01010 50%, #dc0000);
}
.winbtns{
    width: 108px;
    height: 18px;
    padding: 0 3px;
    display: flex;
}
.winbtns button{
    width: 28px;
    display: flex;
    align-items: center;
    justify-content: center;
    border: 1px solid #4b555f;
    border-top: none;
    border-right: none;
    background: linear-gradient(#dfe6ec, #aab6c1 50%, #8998a5 51%, #b3c0cc);
}
.winbtns button:first-child{
    border-bottom-left-radius: 4px;
}
.winbtns .close{
    flex: 1;
    border-right: 1px solid #4b2222;
    border-bottom-right-radius: 4px;
    background: linear-gradient(#e8a594, #cf6a55 50%, #b32f1c 51%, #cf6444);
}

/* tabs */
.tabs{
    height: 24px;
    display: flex;
    align-items: stretch;
    color: #e8e8e8;
    background: linear-gradient(90deg, transparent 92%, #b9c8d6), linear-gradient(#707a82, #53585c 50%, #484c4f);
}
.file{
    width: 56px;
    margin-right: 4px;
    font-weight: 600;
    color: #fff;
    border: 1px solid #1d4aa0;
    border-radius: 3px 3px 0 0;
    background: linear-gradient(#2f6cc8, #1c52b0 50%, #2a6ad0);
}
.tab{
    padding: 0 14px;
    white-space: nowrap;
}
.tab.active{
    color: #111;
    border-radius: 3px 3px 0 0;
    background: linear-gradient(#dedede, #c9c9c9);
    padding: 0 13px;
}
.mini{
    width: 20px;
}
.help{
    width: 16px;
    height: 16px;
    margin: 3px 3px 0 4px;
    border-radius: 50%;
    border: 1px solid #e4ecf8;
    line-height: 14px;
    font-weight: bold;
    color: #fff;
    background: linear-gradient(#6a9ae4, #2a5cb8);
}

/* ribbon */
.ribbon{
    height: 86px;
    display: flex;
    border-bottom: 1px solid #4a4a4a;
    background: linear-gradient(#cacaca, #b8b8b8 60%, #a2a2a2);
}
.group{
    display: flex;
    flex-direction: column;
    border-right: 1px solid #6c6c6c;
    box-shadow: 1px 0 0 #cfcfcf;
}
.g-clip{
    width: 154px;
}
.g-font{
    width: 269px;
}
.g-par{
    width: 229px;
}
.g-style{
    width: 508px;
}
.g-edit{
    width: 102px;
}
.body{
    height: 68px;
    display: flex;
    padding: 2px 4px 0 5px;
}
.name{
    display: flex;
    align-items: center;
    height: 18px;
    padding-right: 5px;
    color: #333;
}
.name span{
    flex: 1;
    text-align: center;
}
.big{
    width: 40px;
    display: flex;
    flex-direction: column;
    align-items: center;
    padding-top: 3px;
    line-height: 13px;
}
.big span:first-of-type{
    margin-top: 5px;
}
.big > svg:last-child{
    margin-top: 4px;
}
.change{
    width: 50px;
    white-space: nowrap;
}
.list{
    display: flex;
    flex-direction: column;
}
.row{
    height: 22px;
    display: flex;
    align-items: center;
    gap: 3px;
    padding-left: 3px;
    white-space: nowrap;
}
.row.off{
    color: #777;
}
.row svg:last-child{
    margin-left: 2px;
}
.rows{
    flex-direction: column;
    gap: 6px;
    padding-top: 9px;
}
.tools{
    display: flex;
    align-items: center;
    height: 23px;
}
.combo{
    display: flex;
    align-items: center;
    height: 21px;
    padding-right: 3px;
    border: 1px solid #8a8a8a;
    background: #c4c4c4;
}
.combo select{
    flex: 1;
    min-width: 0;
    appearance: none;
    font: inherit;
    border: none;
    background: none;
    padding-left: 2px;
}
.combo.font{
    width: 98px;
}
.combo.size{
    width: 43px;
    border-left: none;
}
.tool{
    width: 23px;
    height: 22px;
    display: flex;
    align-items: center;
    justify-content: center;
    border: 1px solid transparent;
    border-radius: 3px;
}
.tool.on{
    border-color: #c79a3c;
    background: linear-gradient(#ffe69a, #ffd04f 50%, #ffe98c);
}
.script{
    font-size: 13px;
}
.script sub, .script sup{
    font-size: 8px;
    color: #2f5fb0;
}
.script sub{
    align-self: flex-end;
}
.script sup{
    align-self: flex-start;
}
.arr{
    width: 12px;
    height: 22px;
    text-align: left;
}
.arr svg{
    vertical-align: middle;
}
.sep{
    width: 12px;
    height: 20px;
    background: linear-gradient(#8a8a8a, #8a8a8a) center / 1px 100% no-repeat;
}
.sep.tight{
    width: 7px;
}
.serif{
    font-family: "DejaVu Serif Condensed", "DejaVu Serif", serif;
    font-weight: bold;
    font-size: 13px;
}
.aa{
    font-size: 12px;
}
.grow{
    font-size: 15px;
}
.grow, .shrink{
    color: #333;
}
.grow svg, .shrink svg{
    align-self: flex-start;
    margin-top: 2px;
}
.strike{
    font-size: 11px;
    font-weight: normal;
}
.glow{
    font-size: 17px;
    color: #e8f4ff;
    text-shadow: 0 0 2px #2c86d8, 0 0 3px #2c86d8;
}
.redbar{
    height: 17px;
    line-height: 12px;
    font-size: 14px;
    color: #2a4a86;
    border-bottom: 4px solid #f00;
    border-radius: 0;
}

/* style gallery */
.gallery{
    height: 60px;
    display: flex;
    margin: 2px 4px 0 0;
    border: 1px solid #8c8c8c;
    background: #bdbdbd;
}
.style{
    width: 72px;
    height: 56px;
    margin-top: 1px;
    padding: 3px;
    display: flex;
    flex-direction: column;
    border: 1px solid transparent;
}
.style span{
    width: 100%;
    height: 17px;
    overflow: hidden;
    background: #fff;
    color: #111;
    line-height: 17px;
    white-space: nowrap;
    text-align: center;
}
.style .demo{
    height: 31px;
    line-height: 35px;
    text-align: left;
    padding-left: 3px;
}
.style.on{
    border: 1px solid #c8912c;
    border-radius: 2px;
    background: #ffd65c;
}
.style .normal{
    font-size: 13px;
}
.style .h1, .style .h2, .style .title, .style .sub{
    font-family: "DejaVu Serif Condensed", "DejaVu Serif", serif;
}
.style .h1{
    font-size: 16px;
    font-weight: bold;
    color: #365f91;
}
.style .h2{
    font-size: 14px;
    font-weight: bold;
    color: #4f81bd;
}
.style .title{
    font-size: 29px;
    line-height: 27px;
    color: #17365d;
}
.style .sub{
    font-size: 14px;
    font-style: italic;
    color: #4f81bd;
}
.scroll{
    width: 15px;
    display: flex;
    flex-direction: column;
    border-left: 1px solid #8c8c8c;
}
.scroll button{
    flex: 1;
    display: flex;
    align-items: center;
    justify-content: center;
    border-bottom: 1px solid #8c8c8c;
    background: linear-gradient(#dcdcdc, #b4b4b4);
}
.scroll button:last-child{
    border-bottom: none;
}
.scroll .dim{
    background: #b4b4b4;
}

/* document area */
.work{
    flex: 1;
    min-height: 0;
    display: grid;
    grid-template-columns: 24px 1fr 18px;
    grid-template-rows: 27px 1fr;
    background: #6f6f6f;
}
.corner button{
    width: 25px;
    height: 24px;
    margin-top: 3px;
    border: 1px solid #555;
}
.corner svg{
    display: block;
    width: 14px;
    height: 14px;
    padding: 3px;
    margin: auto;
    background: #c4c4c4;
    outline: 1px solid #505050;
}
.cols{
    display: grid;
    grid-template-columns: repeat(4, 266px);
    justify-content: center;
    gap: 4px;
}
.hruler svg{
    grid-column: 3;
    margin-top: 8px;
}
.vruler{
    grid-row: 2;
    display: flex;
    flex-direction: column;
    justify-content: flex-end;
    align-items: center;
    overflow: hidden;
}
.canvas{
    grid-row: 2;
    align-content: start;
    overflow: hidden;
    background: linear-gradient(#6a6a6a, #3c3c3c);
}
.page{
    height: 343px;
    padding: 30px 37px 0;
    border: 1px solid #9aa0a8;
    background: #fff;
    box-shadow: 0 0 12px 3px rgba(0, 0, 0, 0.4);
    font-family: Lato, "Liberation Sans", sans-serif;
    font-size: 7px;
    line-height: 11px;
    color: #000;
    overflow: hidden;
}
.page.cut{
    height: 232px;
    padding-top: 0;
    border-top: none;
}
.page p{
    margin-top: 5px;
}
.page p:first-child{
    margin-top: 0;
}
.page p.above{
    margin-top: -7px;
}
.page p.near{
    margin-top: 3px;
}
.page p > span, .page p > b{
    display: block;
    white-space: nowrap;
    text-align: justify;
    text-align-last: justify;
}
.page p > .last{
    text-align-last: left;
}
.page p.heading span{
    line-height: 12px;
    text-align-last: center;
    font-weight: bold;
    font-style: italic;
    text-decoration: underline;
}

/* pasted captures */
.shot{
    display: block;
    margin-top: 5px;
    font-family: "Liberation Sans", sans-serif;
}
.shot.first{
    margin-top: 0;
}
.post{
    font-size: 2px;
    fill: #333;
}
.like{
    font-size: 2px;
    fill: #6a8080;
}
.t4{
    font-size: 4px;
    text-anchor: middle;
}
.t3{
    font-size: 3px;
    text-anchor: middle;
}
.t2{
    font-size: 2px;
    text-anchor: middle;
}
.bold{
    font-weight: bold;
}
.blue{
    fill: #1e4fc8;
    font-weight: bold;
    text-decoration: underline;
}
.wavy{
    font-style: normal;
    text-decoration: underline wavy #22c 1px;
}
.wavy.green{
    text-decoration-color: #2a2;
}
.caret{
    width: 2px;
    height: 10px;
    margin-top: 4px;
    background: #000;
}

/* vertical scroll bar */
.vscroll{
    grid-column: 3;
    grid-row: 1 / 3;
    display: flex;
    flex-direction: column;
    align-items: center;
    background: #666;
    border-left: 1px solid #555;
}
.vscroll button{
    display: flex;
    align-items: center;
    justify-content: center;
}
.split{
    width: 10px;
    height: 2px;
    margin: 5px 0 2px;
    background: #222;
}
.toggle{
    width: 17px;
    height: 17px;
    border: 1px solid #222;
    background: #777;
}
.step{
    height: 17px;
}
.track{
    flex: 1;
    width: 100%;
    display: flex;
    align-items: flex-end;
}
.thumb{
    width: 15px;
    height: 55%;
    margin-left: 1px;
    display: flex;
    flex-direction: column;
    justify-content: center;
    align-items: center;
    gap: 2px;
    border: 1px solid #222;
    border-radius: 2px;
    background: linear-gradient(90deg, #7a7a7a, #5a5a5a);
}
.thumb span{
    width: 7px;
    height: 1px;
    background: #ccc;
}
.jump{
    height: 17px;
}

/* status bar */
.status{
    height: 23px;
    display: flex;
    align-items: center;
    padding-right: 4px;
    color: #e4e4e4;
    border-top: 1px solid #6a6a6a;
    background: linear-gradient(#4e4e4e, #333);
    white-space: nowrap;
}
.cell{
    height: 20px;
    line-height: 20px;
    padding: 0 9px 0 8px;
    border-right: 1px solid #111;
    box-shadow: 1px 0 0 #5c5c5c;
}
.lang{
    display: flex;
    align-items: center;
    gap: 15px;
}
.view{
    width: 18px;
    height: 20px;
    display: flex;
    align-items: center;
    justify-content: center;
}
.view.on{
    width: 20px;
    margin-left: 4px;
    border: 1px solid #c8912c;
    border-radius: 2px;
    background: #ffdf7e;
}
.zoom{
    padding: 0 14px 0 9px;
}
.round{
    width: 16px;
    height: 16px;
}
.round svg{
    display: block;
}
.slider{
    width: 100px;
    height: 20px;
    appearance: none;
    background: linear-gradient(#999, #999) center / 100% 1px no-repeat, linear-gradient(#999, #999) center / 1px 7px no-repeat;
}
.slider::-webkit-slider-thumb{
    appearance: none;
    width: 9px;
    height: 12px;
    background: linear-gradient(#eee, #999);
    clip-path: polygon(0 0, 100% 0, 100% 65%, 50% 100%, 0 65%);
}
```
